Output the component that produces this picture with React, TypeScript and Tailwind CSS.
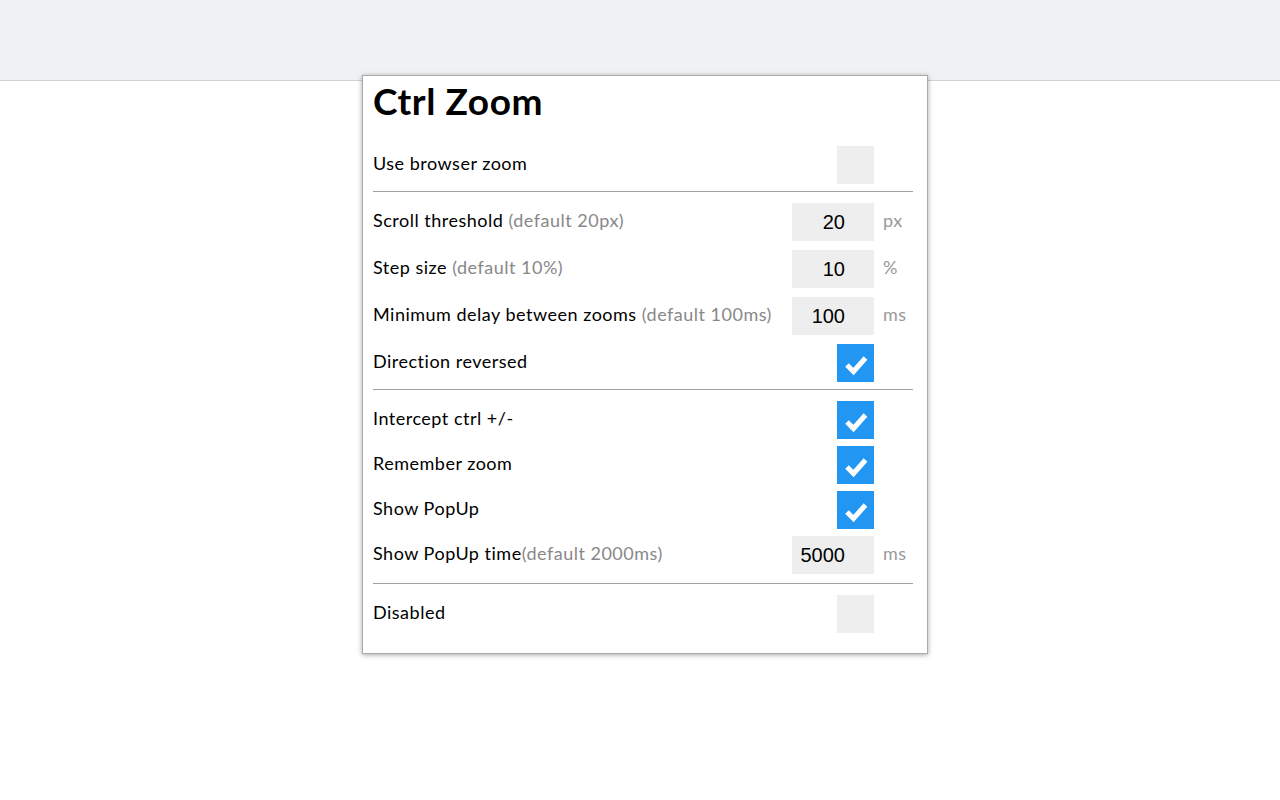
import React from 'react';

const font = { fontFamily: 'Lato, "Open Sans", sans-serif' };

function Check({ on }: { on: boolean }) {
  return (
    <div className={`h-[38px] w-[37px] ${on ? 'bg-[#2196f3]' : 'bg-[#eeeeee]'} flex items-center justify-center`}>
      {on && (
        <svg width="37" height="38" viewBox="0 0 37 38">
          <path d="M10 21 L16.5 27.5 L28.5 14" fill="none" stroke="#fff" strokeWidth="5" strokeLinejoin="miter" />
        </svg>
      )}
    </div>
  );
}

function NumBox({ value }: { value: string }) {
  return (
    <div
      className="h-[38px] w-[82px] bg-[#eeeeee] flex items-center justify-end pr-[29px] text-[20px] text-black"
      style={{ fontFamily: '"Liberation Sans", Arial, sans-serif' }}
    >
      {value}
    </div>
  );
}

function Row({
  label,
  hint,
  space = true,
  control,
  unit,
  className = '',
}: {
  label: string;
  hint?: string;
  space?: boolean;
  control: React.ReactNode;
  unit?: string;
  className?: string;
}) {
  return (
    <div className={`flex items-center h-[38px] ${className}`}>
      <div className="flex-1 pb-[4px] text-[18px] tracking-[0.5px] text-black whitespace-nowrap">
        {label}
        {hint && (
          <span className="text-[#888888]">
            {space ? ' ' : ''}
            {hint}
          </span>
        )}
      </div>
      {control}
      <div className="w-[39px] pl-[9px] pb-[4px] text-[18px] tracking-[0.5px] text-[#999999]">{unit}</div>
    </div>
  );
}

function Rule({ className = '' }: { className?: string }) {
  return <div className={`border-t border-[#a0a0a0] h-px ${className}`} />;
}

export default function App() {
  return (
    <div className="relative min-h-[800px] bg-white" style={font}>
      <div className="h-[81px] bg-[#f0f1f3] border-b border-[#d2d2d2]" />

      <div className="absolute left-[362px] top-[75px] w-[566px] bg-white border border-[#aaaaaa] shadow-[0_1px_5px_rgba(0,0,0,0.35)] pl-[10px] pr-[14px] pb-[20px]">
        <div className="h-[52px] flex items-center pb-[3px]">
          <h1 className="text-[37px] font-bold tracking-[0.6px] text-black leading-none">Ctrl Zoom</h1>
        </div>

        <Row className="mt-[18px]" label="Use browser zoom" control={<Check on={false} />} />
        <Rule className="mt-[7px]" />

        <Row className="mt-[11px]" label="Scroll threshold" hint="(default 20px)" control={<NumBox value="20" />} unit="px" />
        <Row className="mt-[9px]" label="Step size" hint="(default 10%)" control={<NumBox value="10" />} unit="%" />
        <Row
          className="mt-[9px]"
          label="Minimum delay between zooms"
          hint="(default 100ms)"
          control={<NumBox value="100" />}
          unit="ms"
        />
        <Row className="mt-[9px]" label="Direction reversed" control={<Check on />} />
        <Rule className="mt-[7px]" />

        <Row className="mt-[11px]" label="Intercept ctrl +/-" control={<Check on />} />
        <Row className="mt-[7px]" label="Remember zoom" control={<Check on />} />
        <Row className="mt-[7px]" label="Show PopUp" control={<Check on />} />
        <Row
          className="mt-[7px]"
          label="Show PopUp time"
          hint="(default 2000ms)"
          space={false}
          control={<NumBox value="5000" />}
          unit="ms"
        />
        <Rule className="mt-[9px]" />

        <Row className="mt-[11px]" label="Disabled" control={<Check on={false} />} />
      </div>
    </div>
  );
}
